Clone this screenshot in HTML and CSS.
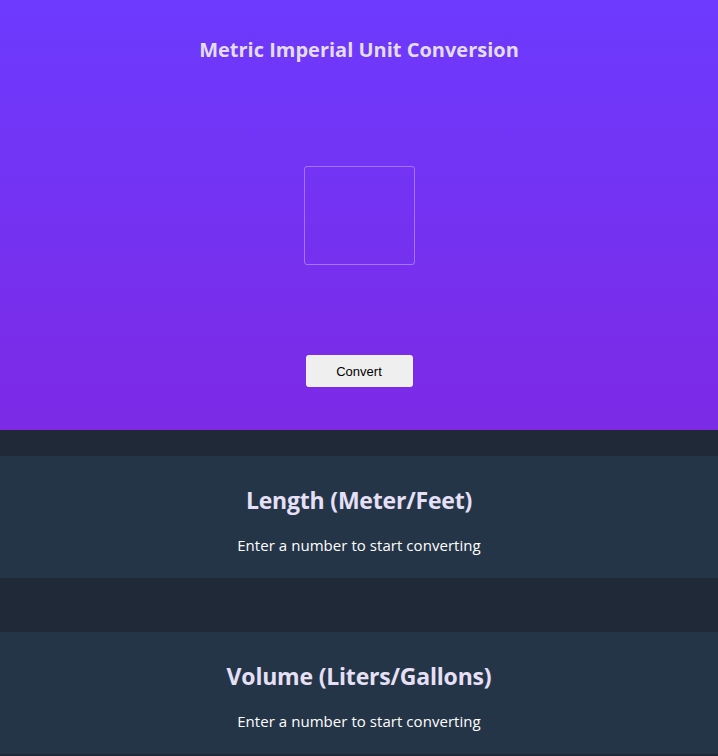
FILE: index.html
```html
<!DOCTYPE html>
<html>
<head>
<meta charset="utf-8">
<link rel="stylesheet" href="styles.css">
</head>
<body>
<header class="hero">
  <h1 class="title">Metric Imperial Unit Conversion</h1>
  <input class="num-input" type="text">
  <button class="convert-btn">Convert</button>
</header>
<main class="results">
  <section class="card">
    <h2 class="card-title">Length (Meter/Feet)</h2>
    <p class="card-text">Enter a number to start converting</p>
  </section>
  <section class="card">
    <h2 class="card-title">Volume (Liters/Gallons)</h2>
    <p class="card-text">Enter a number to start converting</p>
  </section>
</main>
</body>
</html>
```
FILE: styles.css
```css
* { box-sizing: border-box; }
html, body { margin: 0; padding: 0; }
body {
  background: #1f2937;
  font-family: "Open Sans", "Noto Sans", sans-serif;
  height: 756px;
  overflow: hidden;
}
.hero {
  height: 430px;
  background: linear-gradient(180deg, #6d3afe 0%, #7c2ae5 100%);
  display: flex;
  flex-direction: column;
  align-items: center;
  padding-top: 36px;
}
.title {
  margin: 0;
  font-size: 20px;
  font-weight: 700;
  color: #e4dcfd;
  line-height: 28px;
  letter-spacing: 0;
}
.num-input {
  margin-top: 102px;
  width: 111px;
  height: 99px;
  background: transparent;
  border: 1px solid rgba(200, 170, 255, 0.55);
  border-radius: 3px;
  outline: none;
}
.convert-btn {
  margin-top: 90px;
  width: 107px;
  height: 32px;
  background: #efefef;
  border: none;
  border-radius: 3px;
  font-family: "Liberation Sans", Arial, sans-serif;
  font-size: 13px;
  color: #000;
}
.results {
  display: flex;
  flex-direction: column;
  gap: 54px;
  padding-top: 26px;
}
.card {
  background: #253548;
  height: 122px;
  display: flex;
  flex-direction: column;
  align-items: center;
  padding-top: 28px;
}
.card-title {
  margin: 0;
  font-size: 23px;
  font-weight: 700;
  color: #e5e0f7;
  line-height: 32px;
  letter-spacing: -0.2px;
}
.card-text {
  margin: 18px 0 0;
  font-size: 15px;
  color: #ffffff;
  line-height: 22px;
  letter-spacing: 0.05px;
}
```
